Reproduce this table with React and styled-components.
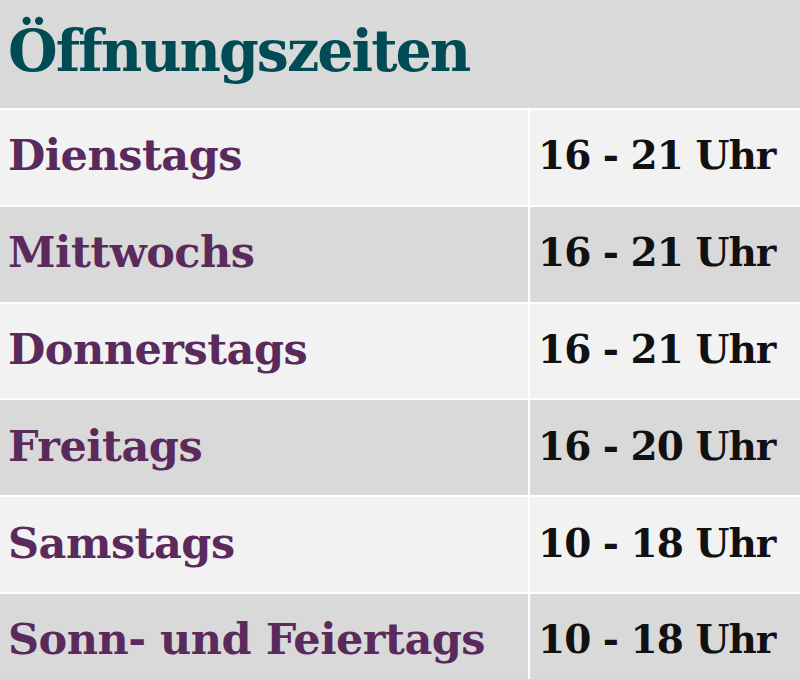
import React from 'react'
import styled, { createGlobalStyle } from 'styled-components'

const Global = createGlobalStyle`
body {
  margin: 0;
  background: #ffffff;
  font-family: "DejaVu Serif", "Liberation Serif", serif;
}
`;

const Table = styled.div`
display: grid;
grid-template-columns: 528px 1fr;
grid-template-rows: 108px;
grid-auto-rows: 94.8px;
gap: 2px;
background: #ffffff;
width: 800px;
height: 679px;
overflow: hidden;
`;

const Head = styled.div`
grid-column: 1 / span 2;
background: #d9d9d9;
display: flex;
align-items: center;
padding: 0 8px 8px;
color: #004c54;
font-size: 57px;
font-weight: 700;
letter-spacing: -2px;
`;

const Cell = styled.div`
display: flex;
align-items: center;
padding: 0 8px 4px;
background: ${p => (p.$even ? '#d9d9d9' : '#f2f2f2')};
font-size: ${p => (p.$day ? '43px' : '39px')};
font-weight: 700;
letter-spacing: ${p => (p.$day ? '-0.5px' : '-1px')};
white-space: nowrap;
color: ${p => (p.$day ? '#5b2a5d' : '#111111')};
`;

const hours = [
    ['Dienstags', '16 - 21 Uhr'],
    ['Mittwochs', '16 - 21 Uhr'],
    ['Donnerstags', '16 - 21 Uhr'],
    ['Freitags', '16 - 20 Uhr'],
    ['Samstags', '10 - 18 Uhr'],
    ['Sonn- und Feiertags', '10 - 18 Uhr'],
];

const App = () => {
    return (
        <>
            <Global />
            <Table>
                <Head>Öffnungszeiten</Head>
                {hours.map(([day, time], i) => (
                    <React.Fragment key={day}>
                        <Cell $day $even={i % 2 === 1}>{day}</Cell>
                        <Cell $even={i % 2 === 1}>{time}</Cell>
                    </React.Fragment>
                ))}
            </Table>
        </>
    )
}

export default App
